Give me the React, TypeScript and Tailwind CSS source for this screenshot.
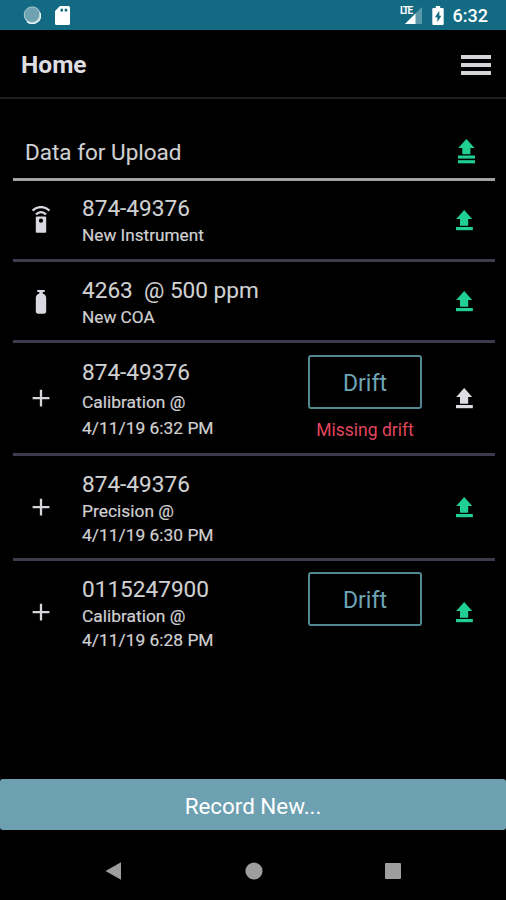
import type { ReactNode } from "react";

function UploadIcon({ className }: { className: string }) {
  return (
    <svg width="17" height="21" viewBox="0 0 17 21" fill="currentColor" className={className}>
      <path d="M8.2 0L16.2 8.9H12.2V15.7H4V8.9H.2Z" />
      <rect x="0" y="17" width="16.8" height="3.2" />
    </svg>
  );
}

function UploadAllIcon() {
  return (
    <svg width="17" height="25" viewBox="0 0 17 25" fill="currentColor" className="text-[#22cf93]">
      <path d="M8.4 0L16.6 8.9H12.4V15.3H4.3V8.9H.3Z" />
      <rect x="0" y="16.5" width="17" height="3.1" />
      <rect x="0" y="21.2" width="17" height="3.1" />
    </svg>
  );
}

function RemoteIcon() {
  return (
    <svg width="20" height="28" viewBox="0 0 20 28" fill="none" className="text-[#d9d9e2]">
      <path d="M1.6 4.6C6.2 -.1 13.8 -.1 18.4 4.6" stroke="currentColor" strokeWidth="2.3" />
      <path d="M5 8.5C7.9 5.4 12.1 5.4 15 8.5" stroke="currentColor" strokeWidth="2.3" />
      <path
        fillRule="evenodd"
        fill="currentColor"
        d="M5.8 10.4H14.2Q15.2 10.4 15.2 11.4V25.8Q15.2 26.8 14.2 26.8H5.8Q4.8 26.8 4.8 25.8V11.4Q4.8 10.4 5.8 10.4ZM10 12.6A2.1 2.1 0 1 0 10 16.8A2.1 2.1 0 1 0 10 12.6Z"
      />
    </svg>
  );
}

function CylinderIcon() {
  return (
    <svg width="12" height="24" viewBox="0 0 12 24" fill="currentColor" className="mt-px text-[#d9d9e2]">
      <path d="M2.3 0H9.7V1.9H7.7V3.6C10 4.3 11.2 6 11.2 8V21.6Q11.2 23.7 9.1 23.7H2.9Q.8 23.7 .8 21.6V8C.8 6 2 4.3 4.3 3.6V1.9H2.3Z" />
    </svg>
  );
}

function PlusIcon() {
  return (
    <svg width="18" height="18" viewBox="0 0 18 18" className="text-[#d6d6da]">
      <path d="M9 .8V17.4M.6 9.1H17.4" stroke="currentColor" strokeWidth="2.3" />
    </svg>
  );
}

function DriftButton() {
  return (
    <button className="h-[54px] w-[114px] rounded-[3px] border-2 border-[#518791] pt-[3px] text-[23px] leading-7 text-[#6ea5b5]">
      Drift
    </button>
  );
}

type RowProps = {
  icon: ReactNode;
  name: string;
  children: ReactNode;
  action?: ReactNode;
  rowClass: string;
  uploadClass?: string;
};

function Row({ icon, name, children, action, rowClass, uploadClass = "text-[#22cf93]" }: RowProps) {
  return (
    <li className={`flex border-[#3d3c4c] ${rowClass}`}>
      <div className="flex w-14 items-center justify-center">{icon}</div>
      <div className="ml-[13px] flex-1 text-[17.4px] text-[#d0d0d2] [-webkit-text-stroke:0.2px]">
        <div className="whitespace-pre text-[22.6px] leading-7 [-webkit-text-stroke:0.1px]">{name}</div>
        {children}
      </div>
      <div className="flex w-[114px] flex-col items-center">{action}</div>
      <div className="ml-[34px] mr-[22px] flex items-center">
        <UploadIcon className={uploadClass} />
      </div>
    </li>
  );
}

export default function App() {
  return (
    <div className="flex h-[900px] w-[506px] flex-col overflow-hidden bg-black font-[Roboto,sans-serif] text-[#d0d0d2]">
      <div className="flex h-[30px] shrink-0 items-center justify-between bg-[#136b83] pl-[23px] pr-[18px] text-white">
        <div className="flex items-center gap-[14px]">
          <svg width="18" height="18" viewBox="0 0 18 18">
            <circle cx="9.2" cy="9" r="8.4" fill="#b9d3da" />
            <circle cx="9" cy="8.6" r="7.4" fill="#6fa3b1" />
            <path d="M4 15.4A8 8 0 0 0 17 7" fill="none" stroke="#e9f3f5" strokeWidth="1.4" />
          </svg>
          <svg width="15" height="19" viewBox="0 0 15 19">
            <path
              fillRule="evenodd"
              fill="white"
              d="M5 0H13.5Q15 0 15 1.5V17.5Q15 19 13.5 19H1.5Q0 19 0 17.5V5ZM5.5 2.8V5.5H8V2.8ZM9.7 2.8V5.5H12.2V2.8Z"
            />
          </svg>
        </div>
        <div className="flex items-center">
          <div className="flex h-[18px] items-end">
            <span className="-mr-[7px] self-start text-[10px] font-bold leading-[10px] tracking-[-1.5px]">LTE</span>
            <svg width="17" height="17" viewBox="0 0 17 17">
              <path d="M17 0V17H0Z" fill="#5b98a9" />
              <path d="M10.5 6.5V17H0Z" fill="white" />
            </svg>
          </div>
          <svg width="12" height="19" viewBox="0 0 12 19" className="ml-[10px]">
            <path d="M3.8 0H8.2V2H10.7Q11.7 2 11.7 3V18Q11.7 19 10.7 19H1.3Q.3 19 .3 18V3Q.3 2 1.3 2H3.8Z" fill="white" />
            <path d="M7.3 4.7L2.9 11.2H5.4V16.3L9.3 9.8H7.3Z" fill="#136b83" />
          </svg>
          <span className="ml-[9px] pt-[2px] text-[18px] font-medium leading-5">6:32</span>
        </div>
      </div>

      <header className="flex h-[69px] shrink-0 items-center justify-between border-b-2 border-[#1d2022] pl-[21px] pr-[15px]">
        <h1 className="pt-[3px] text-[24.5px] font-bold leading-8 text-[#dddde2]">Home</h1>
        <div className="flex w-[30px] flex-col gap-[4px] pt-[2px]">
          <div className="h-[4px] bg-[#d5d5da]" />
          <div className="h-[4px] bg-[#d5d5da]" />
          <div className="h-[4px] bg-[#d5d5da]" />
        </div>
      </header>

      <main className="flex-1 pl-[13px] pr-[11px] pt-6">
        <div className="flex h-[58px] items-center justify-between border-b-[3px] border-[#a5a3a2] pl-3 pr-[20px]">
          <h2 className="pt-[3px] text-[22.5px] leading-7 [-webkit-text-stroke:0.1px]">Data for Upload</h2>
          <div className="pt-[2px]">
            <UploadAllIcon />
          </div>
        </div>
        <ul>
          <Row icon={<RemoteIcon />} name="874-49376" rowClass="h-[81px] border-b-[3px] [&>div:nth-child(2)]:pt-[14px]">
            <div className="text-[17.2px] leading-[25px]">New Instrument</div>
          </Row>
          <Row icon={<CylinderIcon />} name="4263  @ 500 ppm" rowClass="h-[81px] border-b-[3px] [&>div:nth-child(2)]:pt-[15px]">
            <div className="text-[17.2px] leading-[25px]">New COA</div>
          </Row>
          <Row
            icon={<PlusIcon />}
            name="874-49376"
            rowClass="h-[113px] border-b-[3px] [&>div:nth-child(2)]:pt-[16px]"
            uploadClass="text-[#dcdce2]"
            action={
              <>
                <div className="h-3" />
                <DriftButton />
                <div className="mt-2 whitespace-nowrap text-[17.5px] leading-[26px] text-[#e0465c]">Missing drift</div>
              </>
            }
          >
            <div className="mt-[2px] leading-[26px]">Calibration @</div>
            <div className="leading-[26px]">4/11/19 6:32 PM</div>
          </Row>
          <Row icon={<PlusIcon />} name="874-49376" rowClass="h-[105px] border-b-[3px] [&>div:nth-child(2)]:pt-[15px]">
            <div className="leading-6">Precision @</div>
            <div className="leading-6">4/11/19 6:30 PM</div>
          </Row>
          <Row
            icon={<PlusIcon />}
            name="0115247900"
            rowClass="h-[102px] [&>div:nth-child(2)]:pt-[15px]"
            action={
              <div className="pt-[11px]">
                <DriftButton />
              </div>
            }
          >
            <div className="leading-6">Calibration @</div>
            <div className="leading-6">4/11/19 6:28 PM</div>
          </Row>
        </ul>
      </main>

      <button className="h-[51px] shrink-0 rounded-[3px] bg-[#6da1b1] pt-[3px] text-[22.4px] leading-7 text-white">Record New...</button>
      <nav className="flex h-[70px] shrink-0 items-center justify-between pl-[105px] pr-[105px] pt-[12px] text-[#9e9e9e]">
        <svg width="17" height="18" viewBox="0 0 17 18" fill="currentColor">
          <path d="M.5 9L16 .3V17.7Z" />
        </svg>
        <svg width="18" height="18" viewBox="0 0 18 18" fill="currentColor">
          <circle cx="9" cy="9" r="8.6" />
        </svg>
        <div className="h-4 w-4 rounded-[1px] bg-current" />
      </nav>
    </div>
  );
}
